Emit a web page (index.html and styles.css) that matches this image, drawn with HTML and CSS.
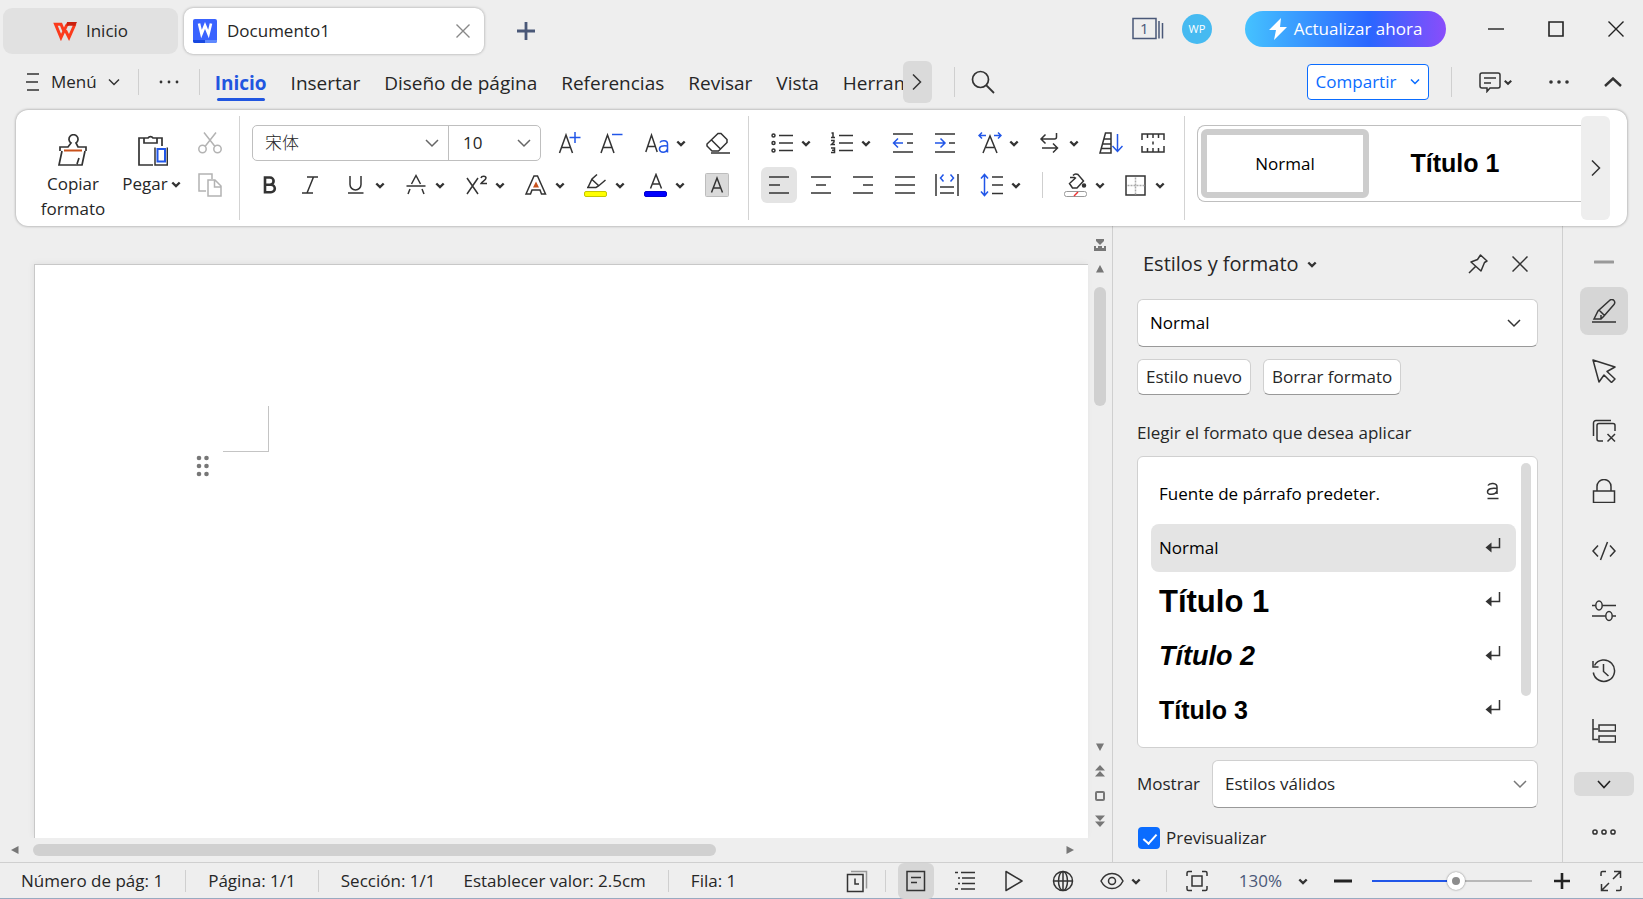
FILE: index.html
```html
<!DOCTYPE html>
<html lang="es">
<head>
  <meta charset="UTF-8">
  <title>Documento1</title>
  <link rel="stylesheet" href="styles.css">
</head>
<body>

  <!-- shared symbols -->
  <svg class="defs" aria-hidden="true">
    <symbol id="chev" viewBox="0 0 16 24"><path d="M4.300 10.500L8 14l3.700-3.500" fill="none" stroke="#333" stroke-width="2.400"/></symbol>
    <symbol id="chev-thin" viewBox="0 0 16 24"><path d="M2 9l6 6 6-6" fill="none" stroke="currentColor" stroke-width="1.500"/></symbol>
    <symbol id="enter" viewBox="0 0 18 18"><path d="M15.500 2v9.500H6" fill="none" stroke="#333" stroke-width="1.500"/><path d="M1.500 11.500l6-5v10z" fill="#333"/></symbol>
  </svg>

  <!-- title bar -->
  <header class="titlebar">
    <button class="tab tab-home">
      <svg width="24" height="20" viewBox="0 0 24 20" aria-hidden="true"><path d="M11 10.500L8 3.200H2.500L8 16.500l5.500-12L15 3M12.500 9.500l3.500 7 6-13.500" fill="none" stroke="#fb3a1c" stroke-width="3"/><path d="M14 1h10l-1.800 3.800h-8.700z" fill="#c9210f"/></svg>
      Inicio
    </button>
    <div class="tab tab-doc">
      <svg width="24" height="24" viewBox="0 0 24 24" aria-hidden="true"><rect width="24" height="24" rx="2" fill="#3a63ff"/><path d="M0 21h12v3H2a2 2 0 0 1-2-2z" fill="#1848e0"/><path d="M12 21h12v1a2 2 0 0 1-2 2H12z" fill="#5f89ff"/><path d="M6 4.500L8.500 15 12 6.500 15.500 15 18 4.500" fill="none" stroke="#fff" stroke-width="2.600"/></svg>
      <span>Documento1</span>
      <button class="tab-close" aria-label="Cerrar"><svg width="14" height="14" viewBox="0 0 14 14"><path d="M.5.5l13 13M13.500.5l-13 13" stroke="#888" stroke-width="1.400"/></svg></button>
    </div>
    <button class="new-tab" aria-label="Nuevo"><svg width="18" height="18" viewBox="0 0 18 18"><path d="M9 0v18M0 9h18" stroke="#4a5878" stroke-width="2.800"/></svg></button>

    <div class="title-right">
      <button aria-label="Ventanas"><svg width="32" height="24" viewBox="0 0 32 24"><path d="M1 1.500h23v20H1zM27 4v17.500M30.500 6v15.500" fill="none" stroke="#4a5878" stroke-width="1.500"/><text x="8" y="17" class="win-count">1</text></svg></button>
      <button class="avatar">WP</button>
      <button class="upgrade"><svg width="18" height="22" viewBox="0 0 18 22" aria-hidden="true"><path d="M12 0L0 12h7l-2 10L18 9h-7z" fill="#fff"/></svg>Actualizar ahora</button>
      <div class="win-buttons">
        <button aria-label="Minimizar"><svg width="16" height="16" viewBox="0 0 16 16"><path d="M0 8h16" stroke="#222" stroke-width="1.400"/></svg></button>
        <button aria-label="Maximizar"><svg width="16" height="16" viewBox="0 0 16 16"><path d="M1 1h14v14H1z" fill="none" stroke="#222" stroke-width="1.600"/></svg></button>
        <button aria-label="Cerrar ventana"><svg width="16" height="16" viewBox="0 0 16 16"><path d="M.5.5l15 15M15.500.5l-15 15" stroke="#222" stroke-width="1.400"/></svg></button>
      </div>
    </div>
  </header>

  <!-- menu bar -->
  <nav class="menubar">
    <button class="menu-btn">
      <svg width="14" height="18" viewBox="0 0 14 18" aria-hidden="true"><path d="M1 1h12M0 9h12M1 17h12" stroke="#333" stroke-width="1.500"/></svg>
      Menú
      <svg width="12" height="8" viewBox="0 0 12 8" aria-hidden="true"><path d="M1 1.500l5 5 5-5" fill="none" stroke="#333" stroke-width="1.500"/></svg>
    </button>
    <i class="sep"></i>
    <button class="menu-more" aria-label="Más"><svg width="20" height="4" viewBox="0 0 20 4"><g fill="#333"><circle cx="2" cy="2" r="1.400"/><circle cx="10" cy="2" r="1.400"/><circle cx="18" cy="2" r="1.400"/></g></svg></button>
    <i class="sep"></i>
    <div class="menu-tabs">
      <a href="#inicio" class="active">Inicio</a>
      <a href="#insertar">Insertar</a>
      <a href="#diseno">Diseño de página</a>
      <a href="#referencias">Referencias</a>
      <a href="#revisar">Revisar</a>
      <a href="#vista">Vista</a>
      <a href="#herramientas">Herramientas</a>
    </div>
    <button class="menu-next" aria-label="Siguiente"><svg width="10" height="16" viewBox="0 0 10 16"><path d="M1 .5l7.500 7.500L1 15.500" fill="none" stroke="#333" stroke-width="1.500"/></svg></button>
    <i class="sep sep-tall"></i>
    <button aria-label="Buscar"><svg width="24" height="24" viewBox="0 0 24 24"><circle cx="9.500" cy="9.500" r="8" fill="none" stroke="#333" stroke-width="1.700"/><path d="M15 15l8 8" stroke="#333" stroke-width="1.800"/></svg></button>

    <div class="menu-right">
      <button class="share">Compartir <svg width="10" height="6" viewBox="0 0 10 6" aria-hidden="true"><path d="M1 .5l4 4 4-4" fill="none" stroke="#0a6cff" stroke-width="1.500"/></svg></button>
      <i class="sep sep-tall"></i>
      <button class="comment" aria-label="Comentarios"><svg width="22" height="22" viewBox="0 0 22 22"><path d="M3 2h16a2 2 0 0 1 2 2v11a2 2 0 0 1-2 2h-8l-3 3.500V17H3a2 2 0 0 1-2-2V4a2 2 0 0 1 2-2zM5 7h12M5 12h7" fill="none" stroke="#333" stroke-width="1.500"/></svg><svg width="14" height="24" aria-hidden="true"><use href="#chev"/></svg></button>
      <button aria-label="Más opciones"><svg width="20" height="4" viewBox="0 0 20 4"><g fill="#333"><circle cx="2" cy="2" r="1.800"/><circle cx="10" cy="2" r="1.800"/><circle cx="18" cy="2" r="1.800"/></g></svg></button>
      <button aria-label="Contraer"><svg width="18" height="10" viewBox="0 0 18 10"><path d="M1 9l8-7.500L17 9" fill="none" stroke="#333" stroke-width="2.400"/></svg></button>
    </div>
  </nav>

  <!-- ribbon -->
  <section class="ribbon">
    <div class="clipboard">
      <button class="big">
        <svg width="30" height="32" viewBox="0 0 30 32" aria-hidden="true"><path d="M4 17l-3 14h23l3-14M2 17v-4h8l3-4a4.500 4.500 0 1 1 5 0l2 4h8v4M24 31l3-14M19 30l2-6" fill="none" stroke="#333" stroke-width="1.700"/><path d="M6 16.500h18" stroke="#c8511b" stroke-width="2"/></svg>
        Copiar formato
      </button>
      <button class="big">
        <svg width="30" height="32" viewBox="0 0 30 32" aria-hidden="true"><path d="M6 4H1v27h14M19 4h5v8M6 9V4h4a3 3 0 0 1 5 0h4v5z" fill="none" stroke="#333" stroke-width="1.700"/><path d="M17 13.500V31h12.300V13.500" fill="none" stroke="#333" stroke-width="1.500"/><path d="M19.500 15h7.500v12.500h-7.500z" fill="none" stroke="#2156e8" stroke-width="2"/></svg>
        <span>Pegar<svg width="16" height="24" aria-hidden="true"><use href="#chev"/></svg></span>
      </button>
      <div class="small-col">
        <button aria-label="Cortar"><svg class="ic dim" viewBox="0 0 24 24"><circle cx="4.500" cy="18" r="3.700"/><circle cx="19.500" cy="18" r="3.700"/><path d="M6 1.500l11 14M18 1.500l-11 14"/></svg></button>
        <button aria-label="Copiar"><svg class="ic dim" viewBox="0 0 24 24"><path d="M8 18H1V1h13v5M10 7h7l6 6v10H10zM16.500 7.500V14H23"/></svg></button>
      </div>
    </div>
    <i class="rule"></i>

    <div class="group font-group">
      <div class="row">
        <div class="font-box">
          <div class="pick pick-font"><select aria-label="Fuente"><option>宋体</option></select><svg width="16" height="24" aria-hidden="true"><use href="#chev-thin"/></svg></div>
          <div class="pick pick-size"><select aria-label="Tamaño"><option>10</option></select><svg width="16" height="24" aria-hidden="true"><use href="#chev-thin"/></svg></div>
        </div>
        <button class="one" aria-label="Aumentar fuente"><svg class="ic" viewBox="0 0 24 24"><path d="M1.500 22L8 4l6.500 18M4 16.500h8"/><path class="blue" d="M17 1v11M11.500 6.500h11"/></svg></button>
        <button class="one" aria-label="Reducir fuente"><svg class="ic" viewBox="0 0 24 24"><path d="M1 22L7.500 4 14 22M3.500 16.500h8"/><path class="blue" d="M12 3.500h10.500"/></svg></button>
        <button class="split" aria-label="Mayúsculas"><svg class="ic" viewBox="0 0 24 24"><path d="M.8 21L6.500 4l5.700 17M3 15.500h7"/><path class="blue" d="M15 11.500c1-2 7.500-3 7.500 1.500v8.500M22.500 15c-5-.5-8.500 0-8 3.500s6.500 4 8-.5"/></svg><svg class="ch"><use href="#chev"/></svg></button>
        <button class="one" aria-label="Borrar formato"><svg class="ic" viewBox="0 0 24 24"><path d="M12 2.500h3l6 6v3l-8.500 8.500H6l-5-5v-2zM5.500 9l9 9M5 22h19"/></svg></button>
      </div>
      <div class="row row-b">
        <button class="one" aria-label="Negrita"><svg class="ic" viewBox="0 0 24 24"><path class="bold" d="M8 4.500h5a3.600 3.600 0 0 1 0 7.200H8zM8 11.700h6a3.800 3.800 0 0 1 0 7.600H8z"/></svg></button>
        <button class="one" aria-label="Cursiva"><svg class="ic" viewBox="0 0 24 24"><path d="M8 4h11M3 20h11M14.500 4L8 20"/></svg></button>
        <button class="split" aria-label="Subrayado"><svg class="ic" viewBox="0 0 24 24"><path d="M6 3v8.500a5.500 5.500 0 0 0 11 0V3M4 20h15.500"/></svg><svg class="ch"><use href="#chev"/></svg></button>
        <button class="split" aria-label="Tachado"><svg class="ic" viewBox="0 0 24 24"><path d="M7.500 11L12 2.500l4.500 8.500M2.500 13h19M6 16l-2 5M18 16l2 5"/></svg><svg class="ch"><use href="#chev"/></svg></button>
        <button class="split" aria-label="Superíndice"><svg class="ic" viewBox="0 0 24 24"><path d="M3 5l11 16M14 5L3 21M17 5c.5-2.500 5-2.500 5 0 0 2-4 3.500-5 5.500h6"/></svg><svg class="ch"><use href="#chev"/></svg></button>
        <button class="split" aria-label="Efectos de texto"><svg class="ic" viewBox="0 0 24 24"><path d="M2 21L10 3h3.500l8 18h-4l-1.500-4H8l-1.500 4z"/><path d="M12 8.500L9 14.500h6z" class="orange"/></svg><svg class="ch"><use href="#chev"/></svg></button>
        <button class="split" aria-label="Resaltado"><svg class="ic" viewBox="0 0 24 24"><path d="M13 1.500L8 6l-4 8.500h8l2.500-1.500 7-6M8 6.500l6.500 6M3 14.500h9"/><rect x=".5" y="18.500" width="22" height="5" rx="1.500" fill="#ff0" stroke="#c5c500" stroke-width="1"/></svg><svg class="ch"><use href="#chev"/></svg></button>
        <button class="split" aria-label="Color de fuente"><svg class="ic" viewBox="0 0 24 24"><path d="M6.500 15.500L12 1.500l5.500 14M8.500 11h7"/><rect x=".5" y="18.500" width="22" height="5" rx="1.500" fill="#00f" stroke="#0000d0" stroke-width="1"/></svg><svg class="ch"><use href="#chev"/></svg></button>
        <button class="one" aria-label="Sombreado"><svg class="ic" viewBox="0 0 24 24"><rect x=".5" y=".5" width="23" height="23" rx="1" fill="#dadada" stroke="#bdbdbd" stroke-width="1"/><path d="M6.500 19.500L12 5l5.500 14.500M8.500 15h7"/></svg></button>
      </div>
    </div>
    <i class="rule"></i>

    <div class="group para-group">
      <div class="row">
        <button class="split" aria-label="Viñetas"><svg class="ic" viewBox="0 0 24 24"><path d="M9 4.500h14M9 12h14M9 19.500h14"/><circle cx="3.500" cy="4.500" r="1.500"/><circle cx="3.500" cy="12" r="1.500"/><circle cx="3.500" cy="19.500" r="1.500"/></svg><svg class="ch"><use href="#chev"/></svg></button>
        <button class="split" aria-label="Numeración"><svg class="ic" viewBox="0 0 24 24"><path d="M9 4.500h14M9 12h14M9 19.500h14M1.500 2h1.500v4M1 6.500h4M1 9.500h3v1.500l-2.500 2.500H5M1 17h3.500v4.500H1M2 19.200h2.500"/></svg><svg class="ch"><use href="#chev"/></svg></button>
        <button class="one" aria-label="Reducir sangría"><svg class="ic" viewBox="0 0 24 24"><path d="M2 3h20M2 21h20M16 12h6"/><path class="blue" d="M12 12H3M7 7.500L2.500 12 7 16.500"/></svg></button>
        <button class="one" aria-label="Aumentar sangría"><svg class="ic" viewBox="0 0 24 24"><path d="M2 3h20M2 21h20M16 12h6"/><path class="blue" d="M2 12h10M7.500 7.500L12 12l-4.500 4.500"/></svg></button>
        <button class="split" aria-label="Escala"><svg class="ic" viewBox="0 0 24 24"><path d="M5 22l7-17 7 17M8 16.500h8"/><path class="blue" d="M8 4.500H1M4 1.500l-3 3 3 3M16 4.500h7M20 1.500l3 3-3 3"/></svg><svg class="ch"><use href="#chev"/></svg></button>
        <button class="split" aria-label="Dirección"><svg class="ic" viewBox="0 0 24 24"><path d="M18.500 2v4a2 2 0 0 1-2 2H3M7.500 3.500L3 8l4.500 4.500M4 17h15M15 12.500l4.500 4.500-4.500 4.500"/></svg><svg class="ch"><use href="#chev"/></svg></button>
        <button class="one" aria-label="Ordenar"><svg class="ic" viewBox="0 0 24 24"><path d="M6.500 2H12v20H1zM5 8h7M3.500 13H12M2.500 17.500H12"/><path class="blue" d="M18.500 3v17M13.500 15l5 5.500 5-5.500"/></svg></button>
        <button class="one" aria-label="Regla"><svg class="ic" viewBox="0 0 24 24"><path d="M1 9V3h22v6M1 15v6h22v-6M6.500 3v4M12 3v4M17.500 3v4M6.500 21v-4M12 21v-4M17.500 21v-4M12 10.500v3"/></svg></button>
      </div>
      <div class="row row-b">
        <button class="al on" aria-label="Izquierda"><svg class="ic" viewBox="0 0 24 24"><path d="M2 4h20M2 12h11M2 20h20"/></svg></button>
        <button class="al" aria-label="Centro"><svg class="ic" viewBox="0 0 24 24"><path d="M2 4h20M7 12h10M2 20h20"/></svg></button>
        <button class="al" aria-label="Derecha"><svg class="ic" viewBox="0 0 24 24"><path d="M2 4h20M12 12h10M2 20h20"/></svg></button>
        <button class="al" aria-label="Justificar"><svg class="ic" viewBox="0 0 24 24"><path d="M2 4h20M2 12h20M2 20h20"/></svg></button>
        <button class="al" aria-label="Distribuir"><svg class="ic" viewBox="0 0 24 24"><path d="M1 1v22M23 1v22M5 14h14M5 20h14"/><path class="blue" d="M8.500 1.500L5.500 5l3 3.500M15.500 1.500l3 3.500-3 3.500"/></svg></button>
        <button class="split spacing" aria-label="Interlineado"><svg class="ic" viewBox="0 0 24 24"><path d="M12 4h11M12 12h11M12 20.500h11"/><path class="blue" d="M4.500 2v20M1 5.500l3.500-4 3.500 4M1 18.500l3.500 4 3.500-4"/></svg><svg class="ch"><use href="#chev"/></svg></button>
        <i class="sep"></i>
        <button class="split" aria-label="Relleno"><svg class="ic" viewBox="0 0 24 24"><path d="M6 4.500h5M9 2.500a4 4 0 0 1 5-1l5.500 6.500-6.500 7H8.500l-3-4.500L12 4.500"/><circle cx="20" cy="12.500" r="1.500" fill="#333"/><rect x=".5" y="18.500" width="22" height="5" rx="2" fill="#fff" stroke="#999" stroke-width="1"/><path d="M10 23l4-4" class="red"/></svg><svg class="ch"><use href="#chev"/></svg></button>
        <button class="split" aria-label="Bordes"><svg class="ic" viewBox="0 0 24 24"><path d="M2 3h19v19H2z"/><path d="M11.500 4.500v17M3.500 12.500h17" class="dash"/></svg><svg class="ch"><use href="#chev"/></svg></button>
      </div>
    </div>
    <i class="rule"></i>

    <div class="gallery">
      <button class="sample selected">Normal</button>
      <button class="sample heading">Título 1</button>
    </div>
    <button class="gallery-next" aria-label="Más estilos"><svg width="10" height="16" viewBox="0 0 10 16"><path d="M1 .5l7.500 7.500L1 15.500" fill="none" stroke="#333" stroke-width="1.500"/></svg></button>
  </section>

  <main class="workspace">
    <section class="doc-area">
      <div class="page" contenteditable="true" aria-label="Documento">
        <i class="margin-mark"></i>
        <svg class="grip" width="14" height="22" viewBox="0 0 14 22" aria-hidden="true"><g fill="#777"><circle cx="3" cy="3" r="2.300"/><circle cx="10.500" cy="3" r="2.300"/><circle cx="3" cy="11" r="2.300"/><circle cx="10.500" cy="11" r="2.300"/><circle cx="3" cy="19" r="2.300"/><circle cx="10.500" cy="19" r="2.300"/></g></svg>
      </div>
      <div class="hscroll">
        <button aria-label="Desplazar a la izquierda"><svg width="8" height="8" viewBox="0 0 8 8"><path d="M7.500 0v8L0 4z" fill="#777"/></svg></button>
        <div class="track"><div class="thumb"></div></div>
        <button aria-label="Desplazar a la derecha"><svg width="8" height="8" viewBox="0 0 8 8"><path d="M.5 0v8L8 4z" fill="#777"/></svg></button>
      </div>
    </section>

    <div class="vscroll">
      <button aria-label="Regla"><svg width="12" height="12" viewBox="0 0 12 12"><path d="M2 0h8v2L6 6 2 2zM0 7h2v2h2V7h4v2h2V7h2v5H0z" fill="#777"/></svg></button>
      <button aria-label="Subir"><svg width="8" height="8" viewBox="0 0 8 8"><path d="M0 7.500h8L4 0z" fill="#777"/></svg></button>
      <div class="track"><div class="thumb"></div></div>
      <button aria-label="Bajar"><svg width="8" height="8" viewBox="0 0 8 8"><path d="M0 .5h8L4 8z" fill="#777"/></svg></button>
      <button aria-label="Página anterior"><svg width="10" height="12" viewBox="0 0 10 12"><path d="M0 5.500h10L5 0zM0 11.500h10L5 6z" fill="#777"/></svg></button>
      <button aria-label="Seleccionar objeto"><svg width="10" height="10" viewBox="0 0 10 10"><rect x="1" y="1" width="8" height="8" rx="1" fill="none" stroke="#777" stroke-width="2"/></svg></button>
      <button aria-label="Página siguiente"><svg width="10" height="12" viewBox="0 0 10 12"><path d="M0 .5h10L5 6zM0 6.500h10L5 12z" fill="#777"/></svg></button>
    </div>

    <!-- styles panel -->
    <aside class="panel">
      <div class="panel-head">
        <button class="panel-title">Estilos y formato <svg width="16" height="24" aria-hidden="true"><use href="#chev"/></svg></button>
        <button aria-label="Fijar"><svg width="20" height="20" viewBox="0 0 20 20"><path d="M12.500 1l6.500 6-2.500 1.500L13 17 3 8l6.500-2.500zM7.500 12.500L1 19" fill="none" stroke="#333" stroke-width="1.500" stroke-linejoin="round"/></svg></button>
        <button aria-label="Cerrar panel"><svg width="16" height="16" viewBox="0 0 16 16"><path d="M.5.5l15 15M15.500.5l-15 15" stroke="#333" stroke-width="1.500"/></svg></button>
      </div>
      <div class="pick drop"><select class="black" aria-label="Estilo actual"><option>Normal</option></select><svg width="16" height="24" aria-hidden="true"><use href="#chev-thin"/></svg></div>
      <div class="panel-buttons">
        <button>Estilo nuevo</button>
        <button>Borrar formato</button>
      </div>
      <p id="list-label">Elegir el formato que desea aplicar</p>
      <div class="style-list">
        <ul role="listbox" aria-labelledby="list-label">
          <li role="option">Fuente de párrafo predeter. <svg width="18" height="18" viewBox="0 0 18 18" aria-hidden="true"><path d="M4 3.500c1.500-3 9-3 9 1.500v7M13 6.500c-5-.5-9.500 0-9.500 3.500s8 3 9.500-1M3.500 16.500h11" fill="none" stroke="#333" stroke-width="1.500"/></svg></li>
          <li role="option" aria-selected="true">Normal <svg width="18" height="18" aria-hidden="true"><use href="#enter"/></svg></li>
          <li role="option" class="h1">Título 1 <svg width="18" height="18" aria-hidden="true"><use href="#enter"/></svg></li>
          <li role="option" class="h2">Título 2 <svg width="18" height="18" aria-hidden="true"><use href="#enter"/></svg></li>
          <li role="option" class="h3">Título 3 <svg width="18" height="18" aria-hidden="true"><use href="#enter"/></svg></li>
        </ul>
        <div class="list-thumb"></div>
      </div>
      <div class="show-row">
        <label for="show">Mostrar</label>
        <div class="pick drop"><select id="show"><option>Estilos válidos</option></select><svg width="16" height="24" aria-hidden="true"><use href="#chev-thin"/></svg></div>
      </div>
      <label class="check"><input type="checkbox" checked>Previsualizar</label>
    </aside>

    <!-- side tools -->
    <aside class="tools">
      <button class="tool-min" aria-label="Ocultar"><svg width="20" height="4" viewBox="0 0 20 4"><path d="M1 2h18" stroke="#999" stroke-width="3" stroke-linecap="round"/></svg></button>
      <button class="tool on" aria-label="Estilos"><svg class="ic" viewBox="0 0 24 24"><path d="M0 23h24M2 20l4-8L17.500 1.500a3 3 0 0 1 4.500 4L12 17l-3 3zM7 11l5.500 5.500M9 20v-4"/></svg></button>
      <button class="tool" aria-label="Seleccionar"><svg class="ic" viewBox="0 0 24 24"><path d="M1 1l22 7-8 4.500 8 7.500-3.500 3.500-7.500-7.500-5 7z" stroke-linejoin="round"/></svg></button>
      <button class="tool" aria-label="Portapapeles"><svg class="ic" viewBox="0 0 24 24"><path d="M1.500 17V4a2.500 2.500 0 0 1 2.500-2.500h15M11 22H7a2 2 0 0 1-2-2V6.500a2 2 0 0 1 2-2h14a2 2 0 0 1 2 2V12M15.500 15l7.500 7.500M23 15l-7.500 7.500"/></svg></button>
      <button class="tool" aria-label="Proteger"><svg class="ic" viewBox="0 0 24 24"><path d="M1.500 12h21v11.500h-21zM5 12V7.500a7 7 0 0 1 14 0V12"/></svg></button>
      <button class="tool" aria-label="Código"><svg class="ic" viewBox="0 0 24 24"><path d="M6 6.500L1 12l5 5.500M18 6.500l5 5.500-5 5.500M15.500 3l-7 18"/></svg></button>
      <button class="tool" aria-label="Ajustes"><svg class="ic" viewBox="0 0 24 24"><path d="M0 6.500h3.500M10.500 6.500H24M0 17h13.500M20.500 17H24"/><ellipse cx="7" cy="6.500" rx="3.200" ry="4.500"/><ellipse cx="17" cy="17" rx="3.200" ry="4.500"/></svg></button>
      <button class="tool" aria-label="Historial"><svg class="ic" viewBox="0 0 24 24"><path d="M2.500 6.500a10.700 10.700 0 1 1-1.200 7M1 2v6h5.500M11.500 5v7.500l5 4.500"/></svg></button>
      <button class="tool" aria-label="Esquema"><svg class="ic" viewBox="0 0 24 24"><path d="M1 0v20.500h5M1 10h5M7 6h16.500v6H7zM7 17h16.500v6H7z"/></svg></button>
      <button class="tool-down" aria-label="Más herramientas"><svg width="14" height="9" viewBox="0 0 14 9"><path d="M1 1l6 6.500L13 1" fill="none" stroke="#222" stroke-width="1.600"/></svg></button>
      <button class="tool-dots" aria-label="Opciones"><svg width="24" height="6" viewBox="0 0 24 6"><g fill="none" stroke="#333" stroke-width="1.500"><circle cx="3" cy="3" r="2.100"/><circle cx="12" cy="3" r="2.100"/><circle cx="21" cy="3" r="2.100"/></g></svg></button>
    </aside>
  </main>

  <!-- status bar -->
  <footer class="status">
    <div class="status-text">
      <span>Número de pág: 1</span>
      <i class="sep"></i>
      <span>Página: 1/1</span>
      <i class="sep"></i>
      <span class="section">Sección: 1/1</span>
      <span>Establecer valor: 2.5cm</span>
      <i class="sep"></i>
      <span>Fila: 1</span>
    </div>
    <div class="status-tools">
      <button class="st" aria-label="Copias"><svg class="ic" viewBox="0 0 24 24"><path d="M6 2.500h15.500v17" stroke="#999"/><path d="M2.500 5.500H18v17H2.500zM10 9.500v5.500h4"/></svg></button>
      <i class="sep"></i>
      <button class="st view on" aria-label="Vista de página"><svg class="ic" viewBox="0 0 24 24"><path d="M3 2.500h17.500v19H3zM7 8.500h10M7 13.500h6"/></svg></button>
      <button class="st view" aria-label="Vista de esquema"><svg class="ic" viewBox="0 0 24 24"><path d="M2 3.500h3M8 3.500h14M5 9h2M9 9h13M5 14.500h2M9 14.500h13M2 20h3M8 20h14"/></svg></button>
      <button class="st view" aria-label="Lectura"><svg class="ic" viewBox="0 0 24 24"><path d="M4 2.500L20 12 4 21.500z" stroke-linejoin="round"/></svg></button>
      <button class="st view" aria-label="Vista web"><svg class="ic" viewBox="0 0 24 24"><circle cx="12" cy="12" r="9.500"/><ellipse cx="12" cy="12" rx="4.500" ry="9.500"/><path d="M2.500 12h19M12 2.500v19"/></svg></button>
      <button class="split" aria-label="Protección ocular"><svg class="ic" viewBox="0 0 24 24"><path d="M1 12C6 2 18 2 23 12 18 22 6 22 1 12z"/><circle cx="12" cy="12" r="3.500"/></svg><svg class="ch"><use href="#chev"/></svg></button>
      <i class="sep"></i>
      <button class="st" aria-label="Ajustar"><svg class="ic" viewBox="0 0 24 24"><path d="M2 7V4a1.500 1.500 0 0 1 1.500-1.500H7M17 2.500h3.500A1.500 1.500 0 0 1 22 4v3M22 17v3a1.500 1.500 0 0 1-1.500 1.500H17M7 21.500H3.500A1.500 1.500 0 0 1 2 20v-3M7 7h10v10H7z"/></svg></button>
      <button class="zoom-val">130%<svg class="ch"><use href="#chev"/></svg></button>
      <button class="st" aria-label="Alejar"><svg width="18" height="18" viewBox="0 0 18 18"><path d="M0 9h18" stroke="#222" stroke-width="3"/></svg></button>
      <input type="range" class="zoom" min="0" max="100" value="53" aria-label="Zoom">
      <button class="st" aria-label="Acercar"><svg width="16" height="16" viewBox="0 0 16 16"><path d="M8 0v16M0 8h16" stroke="#222" stroke-width="2.600"/></svg></button>
      <button class="st full" aria-label="Pantalla completa"><svg class="ic" viewBox="0 0 24 24"><path d="M2 7V4a1.500 1.500 0 0 1 1.500-1.500H7M22 17v3a1.500 1.500 0 0 1-1.500 1.500H17M14 10l7.500-7.500M15 2.500h6.500V9M10 14l-7.500 7.500M9 21.500H2.500V15"/></svg></button>
    </div>
  </footer>

</body>
</html>
```

FILE: styles.css
```css
* {
  box-sizing: border-box;
}
body {
  margin: 0;
  height: 100vh;
  display: flex;
  flex-direction: column;
  overflow: hidden;
  background: #eeeeee;
  color: #262626;
  font-family: "Open Sans", "Noto Sans", "Noto Sans CJK SC", sans-serif;
  font-size: 17px;
  line-height: 24px;
}
button, select, input {
  font: inherit;
  color: inherit;
}
button {
  display: flex;
  align-items: center;
  justify-content: center;
  flex: none;
  margin: 0;
  padding: 0;
  border: 0;
  background: none;
}
svg {
  display: block;
  flex: none;
}
.defs {
  position: absolute;
  width: 0;
  height: 0;
}
.sep {
  width: 1px;
  height: 26px;
  background: #cfcfcf;
  flex: none;
}
.sep-tall {
  height: 30px;
}

/* icons */
.ic {
  width: 24px;
  height: 24px;
  fill: none;
  stroke: #333;
  stroke-width: 1.5px;
}
.ch {
  width: 16px;
  height: 24px;
}
.ic.dim { stroke: #b3b3b3; }
.ic .blue { stroke: #2156e8; }
.ic .red { stroke: #e33; }
.ic .orange { fill: #c8511b; stroke: none; }
.ic .bold { stroke-width: 2.6px; }
.ic .dash { stroke: #aaa; stroke-dasharray: 2 1; }

/* title bar */
.titlebar {
  display: flex;
  align-items: center;
  height: 61px;
  padding: 0 19px 0 3px;
}
.tab {
  display: flex;
  align-items: center;
  height: 46px;
  border-radius: 9px;
}
.tab-home {
  width: 175px;
  gap: 9px;
  background: #e1e1e1;
}
.tab-doc {
  width: 300px;
  margin-left: 6px;
  padding: 0 14px 0 9px;
  gap: 10px;
  background: #fff;
  box-shadow: 0 0 3px rgba(0,0,0,0.35);
}
.tab-close {
  margin-left: auto;
}
.new-tab {
  margin-left: 33px;
}
.title-right {
  display: flex;
  align-items: center;
  margin-left: auto;
  padding-bottom: 4px;
}
.win-count {
  fill: #4a5878;
  font-size: 15px;
}
.avatar {
  width: 30px;
  height: 30px;
  margin: 0 33px 0 18px;
  border-radius: 50%;
  background: #46baf1;
  color: #fff;
  font-size: 11px;
}
.upgrade {
  width: 201px;
  height: 36px;
  gap: 7px;
  border-radius: 18px;
  background: linear-gradient(90deg, #45c2ff, #2a66ff 62%, #8a4dfb);
  color: #fff;
}
.win-buttons {
  display: flex;
  gap: 44px;
  margin-left: 42px;
}

/* menu bar */
.menubar {
  display: flex;
  align-items: center;
  height: 41px;
  padding: 0 21px 0 26px;
}
.menu-btn {
  gap: 11px;
  margin-right: 18px;
}
.menu-more {
  width: 60px;
}
.menu-tabs {
  display: flex;
  gap: 24px;
  width: 703px;
  padding-left: 15px;
  overflow: hidden;
  font-size: 19px;
}
.menu-tabs a {
  padding: 8px 0 6px;
  color: inherit;
  text-decoration: none;
  white-space: nowrap;
}
.menu-tabs .active {
  position: relative;
  color: #2156e0;
  font-weight: bold;
}
.menu-tabs .active::after {
  content: "";
  position: absolute;
  left: 2px;
  right: 2px;
  bottom: 0;
  height: 3px;
  border-radius: 2px;
  background: #2156e0;
}
.menu-next {
  width: 29px;
  height: 42px;
  margin-right: 22px;
  border-radius: 6px;
  background: #dadada;
}
.menubar .sep-tall + button {
  margin-left: 16px;
}
.menu-right {
  display: flex;
  align-items: center;
  margin-left: auto;
}
.share {
  width: 122px;
  height: 36px;
  gap: 14px;
  margin-right: 22px;
  border: 1px solid #0a6cff;
  border-radius: 4px;
  background: #fff;
  color: #0a6cff;
}
.menu-right .sep + .comment {
  margin-left: 27px;
}
.comment {
  margin-right: 34px;
}
.comment + button {
  margin-right: 35px;
}

/* ribbon */
.ribbon {
  display: flex;
  height: 116px;
  margin: 8px 16px 0;
  padding: 6px 17px 6px 26px;
  border-radius: 12px;
  background: #fff;
  box-shadow: 0 0 3px rgba(0,0,0,0.4);
  position: relative;
}
.rule {
  width: 1px;
  background: #d3d3d3;
  flex: none;
}
.clipboard {
  display: flex;
  width: 197px;
}
.big {
  flex-direction: column;
  justify-content: flex-start;
  width: 62px;
  padding-top: 18px;
  gap: 5px;
  line-height: 25px;
}
.big + .big {
  width: 66px;
  margin-left: 16px;
}
.big span {
  display: flex;
  align-items: center;
}
.small-col {
  display: flex;
  flex-direction: column;
  gap: 18px;
  margin-left: 12px;
  padding-top: 15px;
}
.group {
  display: flex;
  flex-direction: column;
  gap: 6px;
  padding-top: 9px;
}
.font-group {
  width: 508px;
  padding-left: 12px;
}
.para-group {
  width: 435px;
  padding-left: 12px;
}
.row {
  display: flex;
  align-items: center;
  gap: 16px;
  height: 36px;
}
.font-group .row-b {
  padding-left: 4px;
}
.para-group .row {
  padding-left: 9px;
}
.para-group .row-b {
  padding-left: 0;
  gap: 6px;
}
.one {
  width: 26px;
}
.split {
  width: 44px;
  justify-content: space-between;
}
.one + .split {
  margin-left: 4px;
}
.al {
  width: 36px;
  height: 36px;
  border-radius: 6px;
}
.al.on {
  background: #e4e4e4;
}
.spacing {
  margin-left: 9px;
}
.row-b .sep {
  margin: 0 15px 0 12px;
}
.row-b .sep + .split {
  margin-right: 10px;
}
.font-box {
  display: flex;
  width: 289px;
  height: 36px;
  border: 1px solid #bfbfbf;
  border-radius: 5px;
}
.font-box .pick + .pick {
  border-left: 1px solid #bfbfbf;
}

/* drop-downs */
.pick {
  position: relative;
  color: #666;
}
.pick select {
  appearance: none;
  width: 100%;
  height: 100%;
  padding: 0 30px 0 12px;
  border: 0;
  background: none;
  color: #262626;
}
.pick svg {
  position: absolute;
  right: 8px;
  top: 50%;
  margin-top: -12px;
  pointer-events: none;
}
.pick-font { width: 195px; }
.pick-font select { font-weight: 300; }
.pick-size { flex: 1; }
.pick-size select { padding-left: 14px; }
.pick select.black { color: #000; }

/* gallery */
.gallery {
  display: flex;
  flex: 1;
  align-self: flex-start;
  height: 77px;
  margin: 9px 0 0 12px;
  padding: 3px;
  overflow: hidden;
  border: 1px solid #bfbfbf;
  border-right: 0;
  border-radius: 8px 0 0 8px;
}
.sample {
  width: 168px;
  color: #000;
}
.sample.selected {
  height: 69px;
  border: 6px solid #cdcdcd;
  border-radius: 6px;
}
.sample.heading {
  width: 172px;
  font: bold 25px "Liberation Sans", sans-serif;
}
.gallery-next {
  width: 29px;
  border-radius: 6px;
  background: #eeeeee;
}

/* workspace */
.workspace {
  display: flex;
  flex: 1;
  min-height: 0;
}
.doc-area {
  display: flex;
  flex-direction: column;
  flex: 1;
  min-width: 0;
  padding-top: 38px;
}
.page {
  position: relative;
  flex: 1;
  margin-left: 34px;
  border: 1px solid #c8c8c8;
  border-width: 1px 0 0 1px;
  background: #fff;
  box-shadow: -1px -1px 6px rgba(0,0,0,0.06);
}
.margin-mark {
  position: absolute;
  left: 188px;
  top: 141px;
  width: 46px;
  height: 46px;
  border: 1px solid #c4c4c4;
  border-width: 0 1px 1px 0;
}
.grip {
  position: absolute;
  left: 161px;
  top: 190px;
}
.hscroll {
  display: flex;
  align-items: center;
  gap: 14px;
  height: 24px;
  padding: 0 14px 0 11px;
  background: #eeeeee;
  position: relative;
}
.hscroll .track {
  flex: 1;
}
.hscroll .thumb {
  width: 67%;
  height: 12px;
  border-radius: 6px;
  background: #d0d0d0;
}
.vscroll {
  display: flex;
  flex-direction: column;
  align-items: center;
  gap: 14px;
  width: 24px;
  padding: 13px 0 35px;
}
.vscroll .track {
  flex: 1;
}
.vscroll .thumb {
  width: 12px;
  height: 119px;
  border-radius: 6px;
  background: #d0d0d0;
}

/* styles panel */
.panel {
  width: 451px;
  padding: 22px 24px 0;
  border-left: 1px solid #cfcfcf;
  border-right: 1px solid #cfcfcf;
}
.panel-head {
  display: flex;
  align-items: center;
  gap: 24px;
  height: 32px;
  padding: 0 10px 0 6px;
}
.panel-title {
  margin-right: auto;
  gap: 5px;
  font-size: 20px;
}
.drop {
  height: 48px;
  border: 1px solid #d0d0d0;
  border-bottom-color: #999;
  border-radius: 6px;
  background: #fff;
  color: #333;
}
.panel > .drop {
  margin-top: 19px;
}
.drop svg {
  right: 15px;
}
.show-row .drop svg {
  right: 9px;
  color: #777;
}
.panel-buttons {
  display: flex;
  gap: 12px;
  margin-top: 12px;
}
.panel-buttons button {
  height: 36px;
  padding: 0 8px;
  border: 1px solid #d0d0d0;
  border-bottom-color: #999;
  border-radius: 6px;
  background: #fff;
}
.panel p {
  margin: 26px 0 11px;
}
.style-list {
  display: flex;
  gap: 5px;
  height: 292px;
  padding: 6px 6px 0 13px;
  overflow: hidden;
  border: 1px solid #d0d0d0;
  border-radius: 6px;
  background: #fff;
  color: #000;
}
.style-list ul {
  display: flex;
  flex-direction: column;
  flex: 1;
  gap: 6px;
  margin: 7px 0 0;
  padding: 0;
  list-style: none;
}
.style-list li {
  display: flex;
  align-items: center;
  justify-content: space-between;
  height: 48px;
  padding: 0 14px 0 8px;
  border-radius: 8px;
}
.style-list li svg {
  margin-bottom: 6px;
}
.style-list li[aria-selected] {
  background: #e4e4e4;
}
.style-list .h1 { font: bold 31px "Liberation Sans", sans-serif; }
.style-list .h2 { font: italic bold 27px "Liberation Sans", sans-serif; }
.style-list .h3 { font: bold 25px "Liberation Sans", sans-serif; }
.list-thumb {
  width: 10px;
  height: 233px;
  border-radius: 5px;
  background: #dadada;
}
.show-row {
  display: flex;
  align-items: center;
  gap: 12px;
  margin-top: 12px;
}
.show-row .drop {
  flex: 1;
}
.check {
  display: flex;
  align-items: center;
  gap: 6px;
  margin-top: 18px;
  padding-left: 1px;
}
.check input {
  appearance: none;
  position: relative;
  width: 22px;
  height: 22px;
  margin: 0;
  border-radius: 4px;
  background: #0a6cff;
}
.check input:checked::after {
  content: "";
  position: absolute;
  left: 8px;
  top: 4px;
  width: 6px;
  height: 11px;
  border: solid #fff;
  border-width: 0 2px 2px 0;
  transform: rotate(42deg);
}

/* side tools */
.tools {
  display: flex;
  flex-direction: column;
  align-items: center;
  gap: 12px;
  width: 80px;
  padding: 34px 0 0 2px;
}
.tool-min {
  margin-bottom: 11px;
}
.tool {
  width: 48px;
  height: 48px;
  border-radius: 8px;
}
.tool.on {
  background: #d6d6d6;
}
.tool-down {
  width: 60px;
  height: 24px;
  margin: 5px 0 21px;
  border-radius: 6px;
  background: #dadada;
}

/* status bar */
.status {
  display: flex;
  align-items: center;
  height: 37px;
  padding: 0 20px 0 21px;
  border-top: 1px solid #cfcfcf;
  border-bottom: 1px solid #9aaac0;
}
.status .sep {
  height: 22px;
}
.status-text, .status-tools {
  display: flex;
  align-items: center;
}
.status-text {
  gap: 22px;
}
.status-text .section {
  margin-right: 6px;
}
.status-tools {
  margin-left: auto;
}
.st {
  min-width: 36px;
  height: 36px;
  margin-right: 10px;
  border-radius: 6px;
}
.st.view {
  margin-right: 13px;
}
.st.on {
  background: #d6d6d6;
}
.status-tools .sep {
  margin-right: 12px;
}
.status-tools .split {
  margin: 0 22px 0 6px;
}
.zoom-val {
  gap: 13px;
  margin: 0 14px 0 14px;
  color: #4a5878;
}
.zoom {
  appearance: none;
  width: 160px;
  height: 18px;
  margin: 0 12px 0 1px;
  background: linear-gradient(90deg, #2156e8 53%, #b8b8b8 53%) center / 100% 2px no-repeat;
}
.zoom::-webkit-slider-thumb {
  appearance: none;
  width: 18px;
  height: 18px;
  border: 5px solid #fff;
  border-radius: 50%;
  background: #8c8c8c;
  box-shadow: 0 0 2px rgba(0,0,0,0.5);
}
.st.full {
  min-width: 24px;
  margin: 0 0 0 9px;
}
```
